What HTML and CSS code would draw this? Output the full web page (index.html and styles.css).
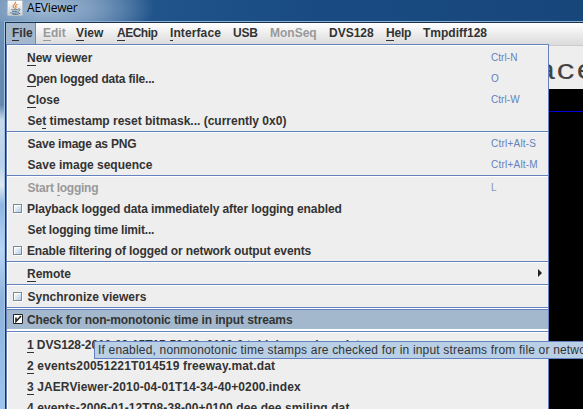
FILE: index.html
```html
<!DOCTYPE html>
<html lang="en">
<head>
<meta charset="utf-8">
<title>AEViewer</title>
<link rel="stylesheet" href="styles.css">
</head>
<body>
<div class="desktop">
  <header class="titlebar">
    <svg class="java" viewBox="0 0 16 16" width="16" height="16">
      <defs><linearGradient id="tile" x2="0" y2="1"><stop stop-color="#fff"/><stop offset="1" stop-color="#ccd1d5"/></linearGradient></defs>
      <rect x=".5" y=".5" width="15" height="15" rx="1" fill="url(#tile)" stroke="#b9c3cc"/>
      <path d="M8.5 1.8c1 2-3.2 3-2.3 4.7.3.8 1 1.2 1.4 2M10.5 4.2C8 5.3 8.3 6 9 7c.4.7-.2 1.3-.6 1.8" fill="none" stroke="#ee8130" stroke-width="1.2"/>
      <path d="M4.5 9.2c-1 .9 5.5.9 6.8.1M5 11c1 .8 4 .8 5.5.2M11.4 9c2.2-.6 2 1.6-.2 2.2M3.4 12.2c-1.8 1.3 7.8 1.5 8.8-.2M5.5 14.2c3 .4 6 .2 7.8-.9" fill="none" stroke="#4f7392"/>
    </svg>
    <span class="title">AEViewer</span>
  </header>
  <main class="window">
    <nav class="menubar">
      <span class="menu open"><u>F</u>ile</span>
      <span class="menu edit off"><u>E</u>dit</span>
      <span class="menu view"><u>V</u>iew</span>
      <span class="menu chip"><u>A</u>EChip</span>
      <span class="menu interface"><u>I</u>nterface</span>
      <span class="menu usb">USB</span>
      <span class="menu monseq off">MonSeq</span>
      <span class="menu dvs">DVS128</span>
      <span class="menu help"><u>H</u>elp</span>
      <span class="menu tmp">Tmpdiff128</span>
    </nav>
    <div class="viewer"><div class="caption">ace</div><div class="plot"><div class="axis"></div></div></div>
    <div class="popup">
      <div class="item"><span class="label"><u>N</u>ew viewer</span><kbd>Ctrl-N</kbd></div>
      <div class="item"><span class="label tighter"><u>O</u>pen logged data file...</span><kbd>O</kbd></div>
      <div class="item"><span class="label"><u>C</u>lose</span><kbd>Ctrl-W</kbd></div>
      <div class="item"><span class="label indent">Se<u>t</u> timestamp reset bitmask... (currently 0x0)</span></div>
      <hr>
      <div class="item"><span class="label indent tighter">Save image as PNG</span><kbd class="wide">Ctrl+Alt-S</kbd></div>
      <div class="item"><span class="label indent">Save image sequence</span><kbd class="wide">Ctrl+Alt-M</kbd></div>
      <hr>
      <div class="item off"><span class="label indent tightest">Start <u>l</u>ogging</span><kbd>L</kbd></div>
      <div class="item"><i class="box"></i><span class="label tight">Playback logged data immediately after logging enabled</span></div>
      <div class="item"><span class="label indent tighter">Set logging time limit...</span></div>
      <div class="item"><i class="box"></i><span class="label filter">Enable filtering of logged or network output events</span></div>
      <hr>
      <div class="item"><span class="label"><u>R</u>emote</span><svg class="arrow" width="4" height="8" viewBox="0 0 4 8"><path d="M0 0L4 4L0 8Z" fill="#222"/></svg></div>
      <hr>
      <div class="item"><i class="box"></i><span class="label indent">Synchronize viewers</span></div>
      <hr>
      <div class="item selected"><svg class="check" width="10" height="10" viewBox="0 0 10 10"><path d="M.5 .5h9v9h-9z" fill="#fff" stroke="#222"/><path d="M3 3.5v4L8 2" fill="none" stroke="#222" stroke-width="1.6"/></svg><span class="label tight">Check for non-monotonic time in input streams</span></div>
      <hr>
      <div class="item recent"><span class="label tight"><u>1</u> DVS128-2010-03-15T15-53-10+0100-0 tobi dance show.dat</span></div>
      <div class="item"><span class="label looser"><u>2</u> events20051221T014519 freeway.mat.dat</span></div>
      <div class="item"><span class="label loose"><u>3</u> JAERViewer-2010-04-01T14-34-40+0200.index</span></div>
      <div class="item"><span class="label loose"><u>4</u> events-2006-01-12T08-38-00+0100 dee dee smiling.dat</span></div>
    </div>
  </main>
  <div class="tooltip">If enabled, nonmonotonic time stamps are checked for in input streams from file or network</div>
</div>
</body>
</html>
```
FILE: styles.css
```css
* { box-sizing: border-box; }
body { margin: 0; overflow: hidden; font: bold 12px "Liberation Sans", Arial, sans-serif; color: #333; }
.desktop { position: relative; width: 583px; height: 409px; overflow: hidden; padding-left: 4px;
  background: linear-gradient(#7196bd 0, #6389b1 85px, #6389b1 105px, #c7daed 120px, #b8d1ec 165px, #dfe8f0 185px, #8cb6e4 205px, #b7d6f8 250px, #8bb2dc 300px, #9bc6f2 409px); }
.titlebar { display: flex; height: 21px; margin-left: -4px; padding-left: 7px;
  background: radial-gradient(ellipse 110px 40px at 45px 8px, #a3bbd4 0, #7b9bbe 45%, transparent 100%), linear-gradient(90deg, #5b83ad 0, #386899 90px, #20548a 150px, #194b82 320px, #17467b 100%); }
.java { flex: none; }
.title { margin-left: 4px; font: 12px/16px "Open Sans", "Noto Sans", sans-serif; color: #000; letter-spacing: -.2px; }
.window { position: relative; height: 388px; border-top: 1px solid #8db0d3; border-left: 1px solid #a9c4df; background: #eee; box-shadow: inset 1px 1px #183352; padding: 1px 0 0 1px; }
.menubar { display: flex; height: 22px; padding-bottom: 1px; background: linear-gradient(#fff, #dadada); }
.menu { flex: none; padding-left: 8px; line-height: 21px; white-space: nowrap; }
u { text-decoration: none; box-shadow: 0 1px #333; display: inline-block; line-height: 13px; }
.off, .off kbd { color: #999; }
.off u { box-shadow: 0 1px #999; }
.open { width: 30px; padding-left: 6px; background: #a3b8cc; border-right: 1px solid #7a8a99; }
.edit { width: 32px; padding-left: 7px; }
.view { width: 41px; }
.chip { width: 53px; letter-spacing: -.5px; }
.interface { width: 63px; letter-spacing: .1px; }
.usb { width: 37px; letter-spacing: -.2px; }
.monseq { width: 59px; }
.dvs { width: 57px; }
.help { width: 37px; letter-spacing: -.2px; }
.viewer { height: 364px; border-top: 1px solid #ccc; }
.caption { width: 120px; height: 43px; margin-left: 530px; font: 28px/52px "Liberation Mono", monospace; color: #444; transform: scaleX(1.19); transform-origin: 0 0; }
.plot { height: 321px; padding-top: 22px; background: #000; }
.axis { height: 1px; background: #0000dc; }
.popup { position: absolute; left: 1px; top: 22px; width: 543px; height: 370px; padding-top: 2px; background: #eee; border: 1px solid #6382bf; box-shadow: inset 1px 1px #fff; }
.item { display: flex; position: relative; align-items: center; height: 21px; padding-left: 20px; white-space: nowrap; }
.indent { margin-left: .6px; }
.tight { letter-spacing: -.1px; }
.filter { letter-spacing: -.13px; }
.tighter { letter-spacing: -.19px; }
.tightest { letter-spacing: -.26px; }
.loose { letter-spacing: .1px; }
.looser { letter-spacing: .16px; }
.item kbd { position: absolute; left: 484px; font: 10px/21px "Liberation Sans", Arial, sans-serif; letter-spacing: .05px; color: #6382bf; }
.item .wide { letter-spacing: .22px; }
.item.off kbd { color: #8797b5; }
hr { height: 2px; margin: 0; border: 0; border-top: 1px solid #6382bf; background: #fff; }
.box, .check { flex: none; width: 9px; height: 9px; margin: -1px 5px 0 -14px; }
.box { border: 1px solid #7a8a99; background: linear-gradient(135deg, #fff, #b8cfe5); box-shadow: inset 1px 1px #fff, 1px 1px #fff; }
.check { width: 10px; height: 10px; margin-right: 4px; }
.arrow { position: absolute; left: 531px; top: 6px; }
.selected { height: 22px; border-top: 1px solid #6382bf; border-bottom: 2px solid #fff; background: #a3b8cc; }
.recent { margin-top: 1px; }
.tooltip { position: absolute; left: 94px; top: 341px; width: 530px; height: 18px; padding-left: 3px; border: 1px solid #6382bf; background: #b8cfe5; font: 12px/17px "Liberation Sans", Arial, sans-serif; letter-spacing: .18px; white-space: nowrap; }
```
